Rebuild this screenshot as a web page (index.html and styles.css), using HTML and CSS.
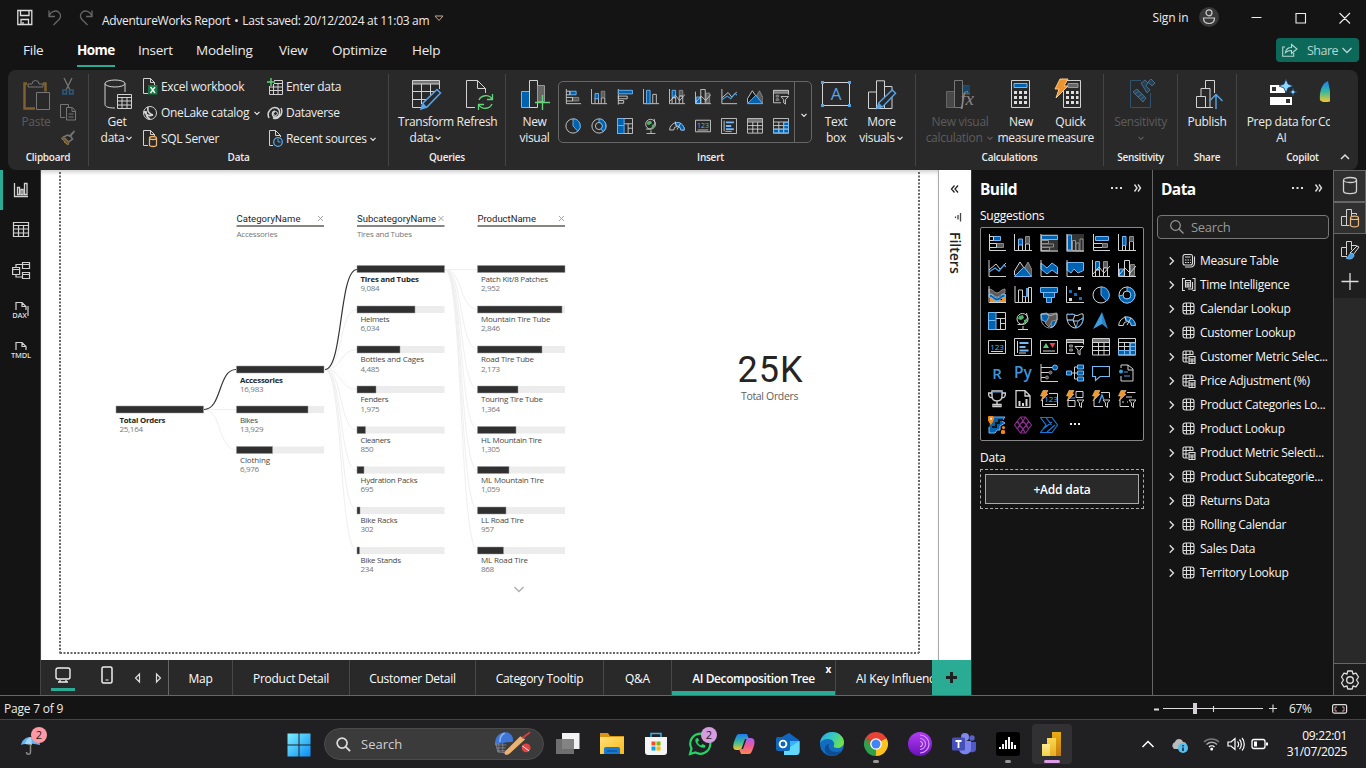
FILE: index.html
```html
<!DOCTYPE html>
<html lang="en">
<head>
<meta charset="utf-8">
<title>AdventureWorks Report</title>
<link rel="stylesheet" href="styles.css">
</head>
<body>
<svg class="defs" aria-hidden="true">
<defs>
<linearGradient id="gWin" x1="0" y1="0" x2="1" y2="1"><stop offset="0" stop-color="#7df0ff"/><stop offset="1" stop-color="#0a8df5"/></linearGradient>
<linearGradient id="gFold" x1="0" y1="0" x2="1" y2="1"><stop offset="0" stop-color="#ffe07a"/><stop offset="1" stop-color="#f7b917"/></linearGradient>
<linearGradient id="gCopA" x1="0" y1="0" x2="0" y2="1"><stop offset="0" stop-color="#1f7cf0"/><stop offset=".5" stop-color="#35b8a0"/><stop offset="1" stop-color="#f8c62a"/></linearGradient>
<linearGradient id="gCopB" x1="0" y1="0" x2="0" y2="1"><stop offset="0" stop-color="#a85ff0"/><stop offset=".5" stop-color="#f0589a"/><stop offset="1" stop-color="#fd8a4e"/></linearGradient>
<linearGradient id="gEdge" x1="0" y1="0" x2="1" y2=".4"><stop offset="0" stop-color="#2aa8ea"/><stop offset=".55" stop-color="#35c9c0"/><stop offset="1" stop-color="#6fe04e"/></linearGradient>
<linearGradient id="gTor" x1="0" y1="0" x2="0" y2="1"><stop offset="0" stop-color="#b13cf5"/><stop offset="1" stop-color="#6a12b8"/></linearGradient>
<linearGradient id="gPb1" x1="0" y1="0" x2="0" y2="1"><stop offset="0" stop-color="#e8ad14"/><stop offset="1" stop-color="#c47a0d"/></linearGradient>
<linearGradient id="gPb2" x1="0" y1="0" x2="0" y2="1"><stop offset="0" stop-color="#fad752"/><stop offset="1" stop-color="#e8ae22"/></linearGradient>
<linearGradient id="gPb3" x1="0" y1="0" x2="0" y2="1"><stop offset="0" stop-color="#fdea90"/><stop offset="1" stop-color="#f5cf48"/></linearGradient>

<symbol id="v-sbar" viewBox="0 0 18 18"><path class="w" d="M1.500 0v16.500H18"/><path class="b" d="M5.500 2.500h7v4h-7z"/><path class="w" d="M1.500 2.500h4v4h-4"/><path class="g" d="M8.500 9.500h7v4h-7z"/><path class="w" d="M1.500 9.500h7v4h-7"/></symbol>
<symbol id="v-scol" viewBox="0 0 18 18"><path class="w" d="M.5 0v16.500H18M4.500 16v-6h4v6M11.500 16v-6h4v6"/><path class="b" d="M4.500 5h4v6h-4z"/><path class="g" d="M11.500 2.500h4v7h-4z"/></symbol>
<symbol id="v-cbar" viewBox="0 0 18 18"><path class="w" d="M1.500 0v17.500"/><path class="b" d="M1.500 1.500h16v4h-16z"/><path class="w" d="M1.500 8h10v3h-10zM1.500 13h6v3h-6"/></symbol>
<symbol id="v-cbars" viewBox="0 0 18 18"><path d="M0 0h18v18H0z" fill="#343434"/><path class="b" d="M1.500 1.500h16v4h-16z"/><path class="g2" d="M1.500 6.500h7v3h-7zM1.500 10h12v3h-12zM1.500 13.500h8v3h-8z"/><path class="w" d="M1 0v17H18"/></symbol>
<symbol id="v-ccol" viewBox="0 0 18 18"><path class="w" d="M.5 0v16.500H18M11 16V6h4v10"/><path class="b" d="M4 1.500h4v15h-4z"/></symbol>
<symbol id="v-ccols" viewBox="0 0 18 18"><path d="M0 0h18v18H0z" fill="#343434"/><path class="b" d="M1.500 1h4v15h-4z"/><path class="g2" d="M6.500 6.500h3v10h-3zM10 9h3v8h-3zM14 5h3v12h-3z"/><path class="w" d="M1 0v17H18"/></symbol>
<symbol id="v-hbar" viewBox="0 0 18 18"><path class="w" d="M1.500 0v16.500H18M1.500 9.500h9v4h-9"/><path class="b" d="M3.500 2.500h13v4h-13z"/><path class="g" d="M10.500 9.500h5v4h-5z"/></symbol>
<symbol id="v-hcol" viewBox="0 0 18 18"><path class="w" d="M.5 0v16.500H18M11.500 16V7h4v9M4.500 16V3h3v13"/><path class="b" d="M4.500 2.500h3.500v9h-3.500z"/><path class="g" d="M11.500 2.500h4v5h-4z"/></symbol>
<symbol id="v-line" viewBox="0 0 18 18"><path class="w" d="M1 0v16.500H18M1 10l7-6 4 5 6-6"/><path class="l" stroke-width="1.300" d="M1 12l6-4 4 3 5-6 2 2"/></symbol>
<symbol id="v-area" viewBox="0 0 18 18"><path class="g" d="M6 16l8-14 4 8v6z"/><path d="M.5 15V11L6 2l6 9-6 5z" fill="#151515" stroke="#d6d6d6"/><path class="b" d="M.5 16.500L10 7l7.500 9.500z"/></symbol>
<symbol id="v-sarea" viewBox="0 0 18 18"><path class="b" d="M1 3l6 5 5-5 5.500 4v7l-5.500-4-5 4-6-5z"/><path class="w" d="M1 0v16.500H18"/></symbol>
<symbol id="v-harea" viewBox="0 0 18 18"><path class="b" d="M1 2.500h16.500v8L12 13l-4-4-3 4-4-3z"/><path class="w" d="M1 0v16.500H18"/></symbol>
<symbol id="v-combo1" viewBox="0 0 18 18"><path class="b" d="M3.500 1.500h4v8h-4z"/><path class="g" d="M11.500 1.500h4v6h-4z"/><path class="w" d="M.5 0v16.500H18M3.500 16v-6h4v6M11.500 16V8h4v8M1 14l6-7 5 6 6-7"/></symbol>
<symbol id="v-combo2" viewBox="0 0 18 18"><path class="b" d="M1.500 9h5v7h-5z"/><path class="g" d="M12.500 4.500h4v11h-4z"/><path class="w" d="M.5 3v13.500H18M6.500 16V.5h5V16M1 15l6-7 5 5 6-7"/></symbol>
<symbol id="v-ribbon" viewBox="0 0 18 18"><path d="M2 8h4v6h8V8h4v9H2z" fill="#ee922e"/><path class="g" d="M1 3c4 0 5 4 8 4s4-4 8-4v4c-4 0-5 4-8 4s-4-4-8-4z"/><path class="b" d="M1 8c4 0 5 4 8 4s4-4 8-4v3c-4 0-5 4-8 4s-4-4-8-4z"/><path class="w" d="M1 0v16.500H18"/></symbol>
<symbol id="v-water" viewBox="0 0 18 18"><path class="w" d="M1 0v16.500H18M4.500 16V4h4v12M14.500 16V1.500h3V16M11.500 11v5"/><path d="M9 10h3V2h2v9H9z" fill="#57a5e8"/></symbol>
<symbol id="v-funnel" viewBox="0 0 18 18"><path class="b" d="M.5 1.500h17v5H.5zM3.500 6.500h11v5h-11zM6.500 11.500h5v5h-5z"/></symbol>
<symbol id="v-scat" viewBox="0 0 18 18"><path class="w" d="M.5 0v16.500H18"/><path fill="#0b6fc7" d="M3 4h3v3H3zM8 7h3v3H8zM13 11h3v3h-3z"/><path fill="#d6d6d6" d="M12 1h3v3h-3zM3 12h3v3H3z"/></symbol>
<symbol id="v-pie" viewBox="0 0 18 18"><circle class="w" cx="9" cy="9" r="8"/><path class="b" d="M9 1v8l5.500 6A8 8 0 0 0 9 1z"/></symbol>
<symbol id="v-donut" viewBox="0 0 18 18"><circle class="w" cx="9" cy="9" r="8"/><circle class="w" cx="9" cy="9" r="4"/><path class="b" d="M9 1v4a4 4 0 1 1-4 4l-4 1a8 8 0 1 0 8-9z"/></symbol>
<symbol id="v-donuth" viewBox="0 0 18 18"><circle class="w" cx="9" cy="9" r="8"/><circle class="w" cx="9" cy="9" r="4"/><path class="b" d="M9 1v4a4 4 0 0 1 2.500 7l2 3.500A8 8 0 0 0 9 1z"/></symbol>
<symbol id="v-tree" viewBox="0 0 18 18"><path class="w" d="M.5 .5h17v17H.5zM8 6.500h9.500M12.500 6.500v11M12.500 11.500h5M12.500 6.500"/><path class="b" d="M.5.5h7.500v17H.5z"/><path d="M.5 8.500h7" stroke="#74b9f5"/></symbol>
<symbol id="v-globe" viewBox="0 0 18 18"><path class="w" d="M12.500 1a8 8 0 0 1-9 11.500M9 14v3M4 17.500h10"/><circle class="w" cx="8.500" cy="7" r="5.500"/><path fill="#4fb566" d="M5 4l4-1 1 3-3 2-3-1zM10 8l3-1-1 4-2 1z"/></symbol>
<symbol id="v-map" viewBox="0 0 18 18"><path class="b" d="M1 2l6-1 2 4-3 5-4-2zM11 9l6-2-3 7-3 2z"/><path class="g" d="M8 2l9-1v7l-5 1-3 6-4-4 4-5z"/><path class="w" d="M1 2c4 1 5-1 8 1s5-2 8-1c1 7-1 13-8 14-6-1-9-7-8-14z" stroke-opacity=".7"/></symbol>
<symbol id="v-map2" viewBox="0 0 18 18"><path class="w" d="M1 2c4 1 5-1 8 1s5-2 8-1c1 7-1 13-8 14-6-1-9-7-8-14zM1 8h6l3 8M7 8l2-5M7 9h5l5-3"/><path class="l" d="M1 2c3 2 4-1 8 1M7 8H2M12 9l5-3c0 5-3 9-7 10z"/></symbol>
<symbol id="v-nav" viewBox="0 0 18 18"><path fill="#3a9fe0" d="M10 0L1 17l9-5z"/><path fill="#2a86c8" d="M10 0l6 17-6-5z"/></symbol>
<symbol id="v-gauge" viewBox="0 0 18 18"><path class="w" d="M.7 13.500a8.300 8.300 0 0 1 16.600 0h-4a4 4 0 0 0-8 0z"/><path class="b" d="M7 5.300c5-1.500 10 2 10.300 8.200h-4C13 10 11 9 9 9z"/><path class="w" d="M7 4l1 5M9 13l4-7"/></symbol>
<symbol id="v-card" viewBox="0 0 18 18"><path class="w" d="M.5 2.500h17v13H.5zM3 13.500h12"/><text x="9" y="11.500" class="s-num">123</text></symbol>
<symbol id="v-mcard" viewBox="0 0 18 18"><path class="w" d="M.5.5h17v17H.5zM3.500 3v12M5 15h7"/><path stroke="#74b9f5" stroke-width="2" d="M5.500 5h9M5.500 9h6M5.500 12.500h9"/></symbol>
<symbol id="v-kpi" viewBox="0 0 18 18"><path class="w" d="M.5 2.500h17v13H.5zM3 13h12"/><path fill="#5fc777" d="M3 10l3-5 3 5z"/><path fill="#ef4351" d="M9.500 5h6l-3 5z"/></symbol>
<symbol id="v-slicer" viewBox="0 0 18 18"><path d="M0 1h18v3H0z" fill="#777"/><path class="w" d="M9 15.500H.5V1.500h17v5M.5 4.500h17M9 8.500h8.500L14 12v5l-2-1.500V12z"/><path class="g" d="M3.500 7h3v2h-3zM3.500 11h3v2h-3z"/></symbol>
<symbol id="v-table" viewBox="0 0 18 18"><path d="M1 1h16v3H1z" fill="#777"/><path class="w" d="M.5.500h17v16.500H.5zM.5 4.500h17M.5 8.500h17M.5 12.500h17M6.500 4.500V17M12 4.500V17"/></symbol>
<symbol id="v-matrix" viewBox="0 0 18 18"><path fill="#0063b1" d="M12 5h6v12H1v-4h11z"/><path class="w" d="M.5.500h17v16.500H.5zM.5 4.500h17M.5 8.500h17M.5 12.500h17M6.500 4.500V17M12 4.500V17"/><path stroke="#74b9f5" fill="none" d="M12 5h5.500v12H.5v-4.500h17M12 8.500h5.500M12 5v12M6.500 13v4"/></symbol>
<symbol id="v-r" viewBox="0 0 18 18"><text x="9" y="15" class="s-r">R</text></symbol>
<symbol id="v-py" viewBox="0 0 18 18"><text x="9" y="14" class="s-py">Py</text></symbol>
<symbol id="v-inf" viewBox="0 0 18 18"><path class="w" d="M1 0v17.500H18M1 3.500h12M1 8.500h8M1 13.500h5"/><circle class="b" cx="15" cy="3.500" r="2.500"/><circle class="g" cx="10.500" cy="8.500" r="1.500"/><circle class="g" cx="7" cy="13.500" r="1.500"/></symbol>
<symbol id="v-decomp" viewBox="0 0 18 18"><path class="w" d="M5 9h6M8.500 3v12M8.500 3h3M8.500 15h3"/><path class="b" d="M.5 7h5v4h-5zM11.500 1h6v4h-6zM11.500 7h6v4h-6zM11.500 13h6v4h-6z"/></symbol>
<symbol id="v-qa" viewBox="0 0 18 18"><path d="M.5 2.500h17v10H8l-4.500 4v-4h-3z" fill="none" stroke="#74b9f5" stroke-width="1.200"/></symbol>
<symbol id="v-narr" viewBox="0 0 18 18"><path class="w" d="M3 4V1h7l5 4v12H3v-5M10 1v5h5"/><circle cx="3" cy="7.500" r="2" fill="#3a9fe0"/><path class="l" d="M6 8h4M6 12h6"/></symbol>
<symbol id="v-trophy" viewBox="0 0 18 18"><path class="w" stroke-width="1.400" d="M4 1h10v5c0 3-2 5-5 5S4 9 4 6zM4 3H.5c0 4 1 5 4 5M14 3h3.500c0 4-1 5-4 5M9 11v4M5 16.500h8v-2H5z"/><path d="M4 2h10M5 15.500h8" stroke="#4a9fe3"/></symbol>
<symbol id="v-pag" viewBox="0 0 18 18"><path class="w" stroke-width="1.300" d="M2 .7h9l5 5v11.600H2zM11 1v5h5"/><path d="M4.500 11h2v5h-2zM8 13h2v3H8zM11.500 9h2v7h-2z" fill="#d6d6d6"/></symbol>
<symbol id="v-bolt" viewBox="0 0 18 18"><path fill="#f0962e" stroke="#f8c878" stroke-width=".6" d="M3 .5h5L6 4h2L1 11l2-5H.5z"/></symbol>
<symbol id="v-b123" viewBox="0 0 18 18"><path class="w" d="M9 3.500h8.500v13H2.500V10M5 14.500h11"/><text x="11" y="12" class="s-num">123</text><use href="#v-bolt"/></symbol>
<symbol id="v-bsl" viewBox="0 0 18 18"><path class="w" d="M10 1.500h7v6h-7zM2 10.500h7v6H2zM11 10h7l-2.500 3v4.500l-2-1.500v-3z"/><path class="l" d="M3 8h6"/><use href="#v-bolt"/></symbol>
<symbol id="v-btx" viewBox="0 0 18 18"><path class="w" d="M9 2.500h8.500V8M2 10v6.500h9M11 10h7l-2.500 3v4.500l-2-1.500v-3z"/><path class="l" d="M7 13l3-8 2 5" stroke-width="1.400"/><use href="#v-bolt"/></symbol>
<symbol id="v-bli" viewBox="0 0 18 18"><path class="w" d="M9 2.500h8.500M2 10v6.500h9M11 10h7l-2.500 3v4.500l-2-1.500v-3zM8 7h6M4 12h2M9 12h1"/><use href="#v-bolt"/></symbol>
<symbol id="v-arc" viewBox="0 0 18 18"><path d="M4 1h13l-3 4 3 2-5 3v4H9l-2 3H1v-6" fill="#0063b1" stroke="#74b9f5"/><path d="M4 11h4V7h3V4h4" stroke="#111" fill="none" stroke-width="2"/><path fill="#f28718" d="M3-.5a3 3 0 0 1 3 3C6 5 3 9 3 9S-.5 5-.5 2.500a3 3 0 0 1 3.500-3z"/><circle cx="3" cy="2.800" r="1" fill="#fff"/><circle cx="15.500" cy="11.500" r="1.600" fill="#f28718"/><circle cx="15" cy="16" r="2.200" fill="#f28718"/></symbol>
<symbol id="v-pa" viewBox="0 0 18 18"><path fill="none" stroke="#8d2c91" stroke-width="1.200" stroke-linejoin="round" d="M6.500 1h5L17.500 9l-6 8h-5L.5 9zM9 5l3.500 4L9 13 5.500 9zM6.500 1L9 5l2.500-4M6.500 17L9 13l2.500 4M3.500 5l2 4-2 4M14.500 5l-2 4 2 4"/></symbol>
<symbol id="v-flow" viewBox="0 0 18 18"><path fill="none" stroke="#1779d8" stroke-width="1.200" d="M.5 1.500H12L17.500 9 12 16.500H.5L6 9zM6 1.500L11.500 9M3 13l9-7M7 16l8-7"/></symbol>
<symbol id="v-more" viewBox="0 0 18 18"><path fill="#ececec" d="M4 7h2v2H4zM8 7h2v2H8zM12 7h2v2h-2z"/></symbol>

<symbol id="chev" viewBox="0 0 8 8"><path d="M1.500 2.800L4 5.300l2.500-2.500" fill="none" stroke="currentColor" stroke-width="1.200"/></symbol>
<symbol id="t-arr" viewBox="0 0 10 10"><path d="M3 .8L7.200 5 3 9.200" fill="none" stroke="#ddd" stroke-width="1.500"/></symbol>
<symbol id="t-table" viewBox="0 0 14 14"><rect class="t" x="1" y="1" width="11" height="11" rx="2.500"/><path class="t" d="M1 4.500h11M1 8.500h11M4.500 1v11M8.500 1v11"/></symbol>
<symbol id="t-calc" viewBox="0 0 14 14"><path class="t" d="M3 13h6a3.500 3.500 0 0 0 3.500-3.500v-7M3 .5h5.500a2 2 0 0 1 2 2V9a2 2 0 0 1-2 2H3a2 2 0 0 1-2-2V2.500a2 2 0 0 1 2-2z"/><path class="t" d="M3 3h5.500M3 6h1.500M5.500 6H7M8 6h1M3 8.500h1.500M5.500 8.500H7M8 8.500h1"/></symbol>
<symbol id="t-time" viewBox="0 0 14 14"><path class="t" d="M3 .5H.5v12H3M10.500.5H13v12h-2.500"/><path class="t" d="M3.500 2.500h5v6.500h-5zM10.500 4v7H6M3.500 4.700h5M3.500 7h5M6 4.500V9"/></symbol>
<symbol id="t-field" viewBox="0 0 14 14"><path class="t" d="M6 12H2.500A1.500 1.500 0 0 1 1 10.500v-8A1.500 1.500 0 0 1 2.500 1h7A1.500 1.500 0 0 1 11 2.500V5M1 4.500h10M1 8h5M4 1v11M8 1v4"/><path class="t" d="M7 6.500h6v7H7zM7 9h6M7 11h6M10 9v4"/></symbol>
<symbol id="pencil" viewBox="0 0 22 22"><path d="M1 21l2-6L17 1.500l3.500 3.500L7 19z" fill="#292929" stroke="#57a5e8" stroke-width="1.500"/><path d="M1 21l2-6 4 4z" fill="#57a5e8"/></symbol>
<symbol id="bars3" viewBox="0 0 30 30"><path class="w" d="M1.500 12h8v16.500h-8zM9.500.8h8v27.700h-8zM17.500 6.500h7.500v22h-7.500z"/></symbol>
</defs>
</svg>

<header class="titlebar">
  <svg class="quick" viewBox="0 0 76 18"><g fill="none" stroke="#ddd" stroke-width="1.300"><path d="M.8 1.500h14v14h-14zM3.500 1.500v5h8.500v-5M4 15.500v-5h7.500v5M6 13v2"/></g><g fill="none" stroke="#666" stroke-width="1.300"><path d="M32 1.500v6h6M32 7c2-5 7-6 9.500-4 3.500 3 2 6 0 8l-5 5"/><path d="M75 1.500v6h-6M75 7c-2-5-7-6-9.500-4-3.500 3-2 6 0 8l5 5"/></g></svg>
  <span class="doc-title">AdventureWorks Report<b>•</b>Last saved: 20/12/2024 at 11:03 am</span>
  <svg class="title-caret" viewBox="0 0 10 7"><path d="M1 1h8L5 5.500z" fill="none" stroke="#c0a890"/></svg>
  <span class="signin">Sign in</span>
  <svg class="avatar" viewBox="0 0 20 20"><circle cx="10" cy="10" r="10" fill="#383838"/><circle cx="10" cy="5.800" r="3" fill="none" stroke="#ccc" stroke-width="1.200"/><path d="M4.500 11h11c0 4-2.300 5.500-5.500 5.500S4.500 15 4.500 11z" fill="none" stroke="#ccc" stroke-width="1.200"/></svg>
  <svg class="winctl" viewBox="0 0 100 12"><path d="M.5 5.500h10M45 1.500h9.500V11H45zM88.500 1l10.500 10.500M99 1L88.500 11.500" fill="none" stroke="#eee" stroke-width="1.100"/></svg>
</header>

<nav class="menu">
  <span class="m-file">File</span><span class="m-home">Home</span><span class="m-ins">Insert</span><span class="m-mod">Modeling</span><span class="m-view">View</span><span class="m-opt">Optimize</span><span class="m-help">Help</span>
  <button class="share"><svg viewBox="0 0 16 14"><path d="M3 4H.7v9.300h11V10M3.500 9.500C4 6 6 4.500 9.500 4.500V1.500L15 6l-5.500 4.500v-3c-3 0-4.500.5-6 2z" fill="none" stroke="currentColor" stroke-width="1.100"/></svg><span>Share</span><svg class="sh-ch" viewBox="0 0 10 8"><path d="M.5 2L5 6.500 9.500 2" fill="none" stroke="currentColor" stroke-width="1.300"/></svg></button>
</nav>

<section class="ribbon">
  <div class="grp g-clip">
    <div class="grp-body">
      <div class="big dim"><svg viewBox="0 0 30 32"><path d="M6 4.500H3.500v25H14M22 4.500h2.500v8" fill="none" stroke="#81602f" stroke-width="2.500"/><path d="M7 8V5h4a3.500 3.500 0 0 1 7 0h4v3z" fill="#292929" stroke="#777"/><path d="M15.500 13.500h13v17h-13z" fill="#292929" stroke="#777"/></svg><p>Paste</p></div>
      <div class="minis">
        <svg viewBox="0 0 16 18"><path d="M4 0l6 12M12 0L6 12" stroke="#777" fill="none" stroke-width="1.300"/><path d="M3 12h3.500v4H3zM9.500 12H13v4H9.500z" fill="none" stroke="#2d5a7d" stroke-width="1.500"/></svg>
        <svg viewBox="0 0 16 18"><path d="M5 13.500H.5V.500h8v3M6.500 3.500h6L15.500 7v9h-9zM12 4v3.500h3M8.500 10h5M8.500 13h5" fill="none" stroke="#777"/></svg>
        <svg viewBox="0 0 16 18"><path d="M14.500 1l-4 5 2 3-4 3-5-5 4-2 2 1z" fill="none" stroke="#777" stroke-width="1.500"/><path d="M1 8l7 7 1-3-5-4zM4 12l4 3" fill="#6c5838" stroke="#8d7040"/></svg>
      </div>
    </div><h6>Clipboard</h6>
  </div>
  <div class="grp g-data">
    <div class="grp-body">
      <div class="big"><svg viewBox="0 0 30 32"><ellipse class="w" cx="13" cy="4.500" rx="10" ry="3.500"/><path class="w" d="M3 4.500v21C3 28 7 29 13 29M23 4.500V13"/><path class="w" fill="#292929" d="M15.500 15.500h14v14h-14zM15.500 18.500h14M15.500 22h14M15.500 26h14M20 18v11.500M25 18v11.500"/></svg><p>Get<br>data<svg class="cv"><use href="#chev"/></svg></p></div>
      <div class="links l1">
        <p><svg viewBox="0 0 16 18"><path class="w" d="M6 15.500H1.500v-15h7l4 4V7M8.500.500v4h4"/><path d="M6 7h9.500v9.500H6z" fill="#107c41"/><path d="M8.500 9l4.500 6M13 9l-4.500 6" stroke="#fff" stroke-width="1.300"/></svg>Excel workbook</p>
        <p><svg viewBox="0 0 16 18"><circle class="w" cx="8" cy="9" r="6.500"/><path class="w" stroke-width="1.700" d="M2 7c2 5 6 5 9 4M6 3c-1 4 1 7 5 8M8 15c-3-1-4-4-4-8"/></svg>OneLake catalog <svg class="cv far"><use href="#chev"/></svg></p>
        <p><svg viewBox="0 0 16 18"><path class="w" d="M6 15.500H1.500v-15h7l4 4V7M8.500.500v4h4"/><path d="M7.500 8v7c0 2 7 2 7 0V8c0-2-7-2-7 0zc0 2 7 2 7 0" fill="#292929" stroke="#f0b16a" stroke-width="1.300"/></svg>SQL Server</p>
      </div>
      <div class="links l2">
        <p><svg viewBox="0 0 16 18"><path class="w" d="M7 2.500h8.500v14H2.500V8M2.500 9h13M2.500 12.500h13M6.500 6v10M11 5v11M7 5.500h8"/><path d="M4 0v8M0 4h8" stroke="#63d479" stroke-width="1.400"/></svg>Enter data</p>
        <p><svg viewBox="0 0 16 18"><path class="w" stroke-width="1.500" d="M2 14C-1 8 5 2 10 4c4 2 3 9-1 9-4 1-5-5-1-6M14 4c3 6-3 12-8 10"/><circle class="w" cx="8.500" cy="9.500" r="2"/></svg>Dataverse</p>
        <p><svg viewBox="0 0 16 18"><path class="w" d="M6 15.500H2.500v-15h6l5 5V7M8.500.500v5h5"/><circle cx="11" cy="12" r="4.300" fill="#292929" stroke="#57a5e8" stroke-width="1.300"/><path d="M11 9v3h2.500" fill="none" stroke="#57a5e8"/></svg>Recent sources <svg class="cv"><use href="#chev"/></svg></p>
      </div>
    </div><h6>Data</h6>
  </div>
  <div class="grp g-query">
    <div class="grp-body">
      <div class="big q1"><svg viewBox="0 0 30 32"><path d="M1.500 1.500h27v3.500h-27z" fill="#777"/><path class="w" d="M11 28.500H1.500v-27h27V10M1.500 5h27M1.500 12.500h23M1.500 20.500h15M10.500 5v20M19.500 5v11"/><svg x="9" y="9" width="22" height="22"><use href="#pencil"/></svg></svg><p>Transform<br>data<svg class="cv"><use href="#chev"/></svg></p></div>
      <div class="big q2"><svg viewBox="0 0 30 32"><path class="w" d="M13 28.500H4.500v-27h11l8 8V14M15.500 1.500v8h8"/><path d="M17 21c2-5 10-6 13-1M30.500 15v5.500H25M30 25c-2 5-10 6-13 1M16.500 31v-5.500H22" fill="none" stroke="#63d479" stroke-width="1.300"/></svg><p>Refresh</p></div>
    </div><h6>Queries</h6>
  </div>
  <div class="grp g-insert">
    <div class="grp-body">
      <div class="big i1"><svg viewBox="0 0 30 32"><path d="M1.500 12.500h8v16h-8z" fill="#0063b1" stroke="#74b9f5"/><path class="w" d="M9.500 1.500h8v27h-8z"/><path d="M17.500 6.500h7v16h-7z" fill="#666" stroke="#999"/><path d="M22.500 16v15M15 23.500h15" stroke="#63d479" stroke-width="1.400"/></svg><p>New<br>visual</p></div>
      <div class="gallery">
        <div class="gal-grid">
          <svg><use href="#v-sbar"/></svg><svg><use href="#v-scol"/></svg><svg><use href="#v-cbar"/></svg><svg><use href="#v-ccol"/></svg><svg><use href="#v-combo1"/></svg><svg><use href="#v-combo2"/></svg><svg><use href="#v-line"/></svg><svg><use href="#v-area"/></svg><svg><use href="#v-slicer"/></svg>
          <svg><use href="#v-pie"/></svg><svg><use href="#v-donuth"/></svg><svg><use href="#v-tree"/></svg><svg><use href="#v-globe"/></svg><svg><use href="#v-gauge"/></svg><svg><use href="#v-card"/></svg><svg><use href="#v-mcard"/></svg><svg><use href="#v-table"/></svg><svg><use href="#v-matrix"/></svg>
        </div>
        <div class="gal-drop"><svg class="cv"><use href="#chev"/></svg></div>
      </div>
      <div class="big i2"><svg viewBox="0 0 30 32"><path class="w" d="M1.500 3.500h27v23h-27z"/><path fill="#57a5e8" d="M0 2h3v3H0zM27 2h3v3h-3zM0 25h3v3H0zM27 25h3v3h-3z"/><text x="15" y="21" class="s-a">A</text></svg><p>Text<br>box</p></div>
      <div class="big i3"><svg viewBox="0 0 30 32"><svg y="1" width="30" height="30"><use href="#bars3"/></svg><svg x="9" y="9" width="21" height="22"><use href="#pencil"/></svg></svg><p>More<br>visuals<svg class="cv"><use href="#chev"/></svg></p></div>
    </div><h6>Insert</h6>
  </div>
  <div class="grp g-calc">
    <div class="grp-body">
      <div class="big dim c1"><svg viewBox="0 0 30 32"><path d="M1.500 12.500h8v16h-8zM17.500 7h7v8h-7z" fill="#484848" stroke="#666"/><path d="M9.500 1.500h8v27h-8z" fill="none" stroke="#777"/><path d="M18 7h7v7h-7z" fill="#174667"/><text x="22" y="26" class="s-fx">fx</text></svg><p>New visual<br>calculation <svg class="cv"><use href="#chev"/></svg></p></div>
      <div class="big c2"><svg viewBox="0 0 30 32"><path class="w" d="M5.500 1.500h18v27h-18z"/><path class="b" d="M8 4.500h13v4H8z"/><path fill="#ddd" d="M8 12h3v3H8zM13 12h3v3h-3zM18 12h3v3h-3zM8 17h3v3H8zM13 17h3v3h-3zM18 17h3v3h-3zM8 22h3v3H8zM13 22h3v3h-3zM18 22h3v3h-3z"/></svg><p>New<br>measure</p></div>
      <div class="big c3"><svg viewBox="0 0 30 32"><path class="w" d="M7.500 1.500h17v27h-17z"/><path d="M12 4.500h10v4H12z" fill="#666" stroke="#999"/><path fill="#ddd" d="M10 12h3v3h-3zM15 12h3v3h-3zM20 12h2.500v3H20zM10 17h3v3h-3zM15 17h3v3h-3zM20 17h2.500v3H20zM10 22h3v3h-3zM15 22h3v3h-3zM20 22h2.500v3H20z"/><path d="M4 0h8L8 7h4L0 19l3-9H-1z" fill="#ee922e" stroke="#f7c987"/></svg><p>Quick<br>measure</p></div>
    </div><h6>Calculations</h6>
  </div>
  <div class="grp g-sens">
    <div class="grp-body"><div class="big dim full"><svg viewBox="0 0 30 32"><path d="M15 1.500H4.500v27h20V14" fill="none" stroke="#2f536d"/><path d="M7 13l4-3 9 9-3 4zM15 4l4-3 3 3-2 3 4 4-3 3zM22 3l3-3 4 4-3 3z" fill="#24435a" stroke="#456b85"/><path d="M9 15l4-3M12 18l4-3M15 20l4-3" stroke="#456b85"/></svg><p>Sensitivity<br><svg class="cv"><use href="#chev"/></svg></p></div></div><h6>Sensitivity</h6>
  </div>
  <div class="grp g-share">
    <div class="grp-body"><div class="big full"><svg viewBox="0 0 30 32"><path class="w" stroke-linejoin="round" d="M4.500 17.500h9v11h-9zM9 17V9.500h9v19h-4.500M13.500 9V1.500h9V14M13 28.500h8"/><path d="M24 30V16M17.500 22l6.500-6.500 6.500 6.500" stroke="#57a5e8" fill="none" stroke-width="1.400"/></svg><p>Publish</p></div></div><h6>Share</h6>
  </div>
  <div class="grp g-cop">
    <div class="grp-body"><div class="big p1"><svg viewBox="0 0 30 32"><path fill="#fff" d="M3 6h15v8H3zM3 18h22v8H3z"/><path fill="#333" d="M5 8h4v4H5zM19 20h4v4h-4z"/><path d="M19 0l2 5 5 2-5 2-2 5-2-5-5-2 5-2zM26 9l1 3 3 1-3 1-1 3-1-3-3-1 3-1z" fill="#90d7ff" stroke="#153e69" stroke-width=".8"/></svg><p>Prep data for<br>AI</p></div><div class="big p2"><svg viewBox="0 0 30 32"><path d="M10 2C4 4 1 13 2 21c2 3 7 2 12 1z" fill="url(#gCopA)"/></svg><p>Co</p></div></div><h6>Copilot</h6>
  </div>
  <svg class="collapse" viewBox="0 0 10 8"><path d="M1 6l4-4 4 4" fill="none" stroke="#ddd" stroke-width="1.500"/></svg>
</section>

<main class="work">
  <aside class="rail">
    <svg class="on" viewBox="0 0 18 18"><path class="w" stroke-width="1.300" d="M2.500 2v13.500H16M5.500 6.500h2v7h-2zM9 8.500h2v5H9zM12.500 2.500h2.500v11h-2.500z"/></svg>
    <svg viewBox="0 0 18 18"><path class="w" stroke-width="1.200" d="M1.500 1.500h15v14h-15zM1.500 4.500h15M1.500 8h15M1.500 12h15M6.500 4.500v11M11.500 4.500v11"/></svg>
    <svg viewBox="0 0 18 18"><path class="w" stroke-width="1.200" d="M.6 6.500h7v7h-7zM.6 8.500h7M10.500 1.500h7v6h-7zM10.500 3.500h7M10.500 11.500h7v6h-7zM10.500 13.500h7M4 6V3.500h6M4 13.500V16h6"/></svg>
    <svg viewBox="0 0 18 18"><path class="w" stroke-width="1.200" d="M4 9V1.500h6l4 4V9M10 1.500v4h4M16 5v10"/><text x="7.500" y="17" class="s-rail">DAX</text></svg>
    <svg viewBox="0 0 18 18"><path class="w" stroke-width="1.200" d="M4 9V1.500h6l4 4V9M10 1.500v4h4"/><text x="9" y="17" class="s-rail">TMDL</text></svg>
  </aside>

  <div class="stage">
    <div class="stage-top">
    <svg class="canvas" viewBox="41 170 897 490">
      <path d="M60 172v481.500M60 653h859M919 172v481" fill="none" stroke="#666" stroke-width="2" stroke-dasharray="2 1.500"/>
      <g class="faint">
        <path d="M204 409.500h32M204 409.500c18 0 14 40 32 40"/>
        <path d="M325 369.500c18 0 14-60 32-60M325 369.500c18 0 14-20 32-20M325 369.500c18 0 14 20 32 20M325 369.500c18 0 14 60.500 32 60.500M325 369.500c18 0 14 101 32 101M325 369.500c18 0 14 141 32 141M325 369.500c18 0 14 181 32 181"/>
        <path d="M445 269.500h33M445 269.500c18 0 14 40 33 40M445 269.500c18 0 14 80 33 80M445 269.500c18 0 14 120 33 120M445 269.500c18 0 14 160.500 33 160.500M445 269.500c18 0 14 201 33 201M445 269.500c18 0 14 241 33 241M445 269.500c18 0 14 281 33 281"/>
      </g>
      <path class="strong" d="M204 409.500c18 0 14-40 32-40M325 369.500c18 0 14-100 32-100"/>
      <g class="track"><path d="M236.500 406h87.500v7h-87.500zM236.500 446.500h87.500v7h-87.500z"/><path d="M357 306h87.500v7H357zM357 346h87.500v7H357zM357 386h87.500v7H357zM357 426.500h87.500v7H357zM357 466.500h87.500v7H357zM357 507h87.500v7H357zM357 547h87.500v7H357z"/><path d="M477.500 306H565v7h-87.500zM477.500 346H565v7h-87.500zM477.500 386H565v7h-87.500zM477.500 426.500H565v7h-87.500zM477.500 466.500H565v7h-87.500zM477.500 507H565v7h-87.500zM477.500 547H565v7h-87.500z"/></g>
      <g class="bar"><path d="M116 406h87.500v7H116zM236.500 366h87.500v7h-87.500zM236.500 406H308v7h-71.500zM236.500 446.500h36v7h-36z"/><path d="M357 265.500h87.500v7H357zM357 306h58v7h-58zM357 346h43v7h-43zM357 386h19v7h-19zM357 426.500h8.500v7H357zM357 466.500h7v7h-7zM357 507h3v7h-3zM357 547h2.500v7H357z"/><path d="M477.500 265.500H565v7h-87.500zM477.500 306H562v7h-84.500zM477.500 346H542v7h-64.500zM477.500 386H518v7h-40.500zM477.500 426.500H516v7h-38.500zM477.500 466.500H509v7h-31.500zM477.500 507H506v7h-28.500zM477.500 547h26v7h-26z"/></g>
      <g class="head"><text x="236.500" y="222" textLength="64">CategoryName</text><text x="357" y="222" textLength="79">SubcategoryName</text><text x="477.500" y="222" textLength="58.500">ProductName</text></g>
      <path d="M236.500 226H324M357 226h87.500M477.500 226H565" stroke="#605e5c" stroke-width="1.600"/>
      <path d="M318 216l5 5M323 216l-5 5M438.500 216l5 5M443.500 216l-5 5M559 216l5 5M564 216l-5 5" stroke="#999" stroke-width=".9"/>
      <g class="val"><text x="236.500" y="237" textLength="41">Accessories</text><text x="357" y="237" textLength="55">Tires and Tubes</text></g>
      <g class="strongtxt"><text x="119.500" y="423" textLength="46">Total Orders</text><text x="240" y="382.500" textLength="43">Accessories</text><text x="360.500" y="282" textLength="58.500">Tires and Tubes</text></g>
      <g class="lab"><text x="240" y="423" textLength="18">Bikes</text><text x="240" y="463" textLength="30">Clothing</text>
      <text x="360.500" y="322" textLength="29">Helmets</text><text x="360.500" y="362" textLength="63.500">Bottles and Cages</text><text x="360.500" y="402" textLength="28">Fenders</text><text x="360.500" y="443" textLength="30">Cleaners</text><text x="360.500" y="483" textLength="57">Hydration Packs</text><text x="360.500" y="523" textLength="37">Bike Racks</text><text x="360.500" y="563" textLength="40.500">Bike Stands</text>
      <text x="481" y="282" textLength="67">Patch Kit/8 Patches</text><text x="481" y="322" textLength="69.500">Mountain Tire Tube</text><text x="481" y="362" textLength="53">Road Tire Tube</text><text x="481" y="402" textLength="62">Touring Tire Tube</text><text x="481" y="443" textLength="61">HL Mountain Tire</text><text x="481" y="483" textLength="63">ML Mountain Tire</text><text x="481" y="523" textLength="43">LL Road Tire</text><text x="481" y="563" textLength="47">ML Road Tire</text></g>
      <g class="val"><text x="119.500" y="432" textLength="23.500">25,164</text><text x="240" y="392" textLength="23.500">16,983</text><text x="240" y="432" textLength="23.500">13,929</text><text x="240" y="472" textLength="19">6,976</text>
      <text x="360.500" y="291" textLength="19">9,084</text><text x="360.500" y="331" textLength="19">6,034</text><text x="360.500" y="372" textLength="19">4,485</text><text x="360.500" y="412" textLength="19">1,975</text><text x="360.500" y="452" textLength="13">850</text><text x="360.500" y="492" textLength="13">695</text><text x="360.500" y="532" textLength="13">302</text><text x="360.500" y="572" textLength="13">234</text>
      <text x="481" y="291" textLength="19">2,952</text><text x="481" y="331" textLength="19">2,846</text><text x="481" y="372" textLength="19">2,173</text><text x="481" y="412" textLength="19">1,364</text><text x="481" y="452" textLength="19">1,305</text><text x="481" y="492" textLength="19">1,059</text><text x="481" y="532" textLength="13">957</text><text x="481" y="572" textLength="13">868</text></g>
      <path d="M514.500 587l4.500 4.500 4.500-4.500" fill="none" stroke="#b0b0b0" stroke-width="1.500"/>
      <text class="kpi" x="737.500" y="381.500" textLength="65">25K</text><text class="kpilab" x="741" y="400" textLength="57.500">Total Orders</text>
    </svg>
    <div class="filters"><svg viewBox="0 0 10 10"><path d="M4.500 1.500L1.500 5l3 3.500M8 1.500L5 5l3 3.500" fill="none" stroke="#222" stroke-width="1.300"/></svg><svg class="fi" viewBox="0 0 10 10"><path d="M7.500 1v8.500M5 3v4.500M2.500 4.500v1.500" stroke="#444" stroke-width="1.300"/></svg><span>Filters</span></div>
    </div>
    <div class="tabs">
      <div class="tools">
        <span class="dev on"><svg viewBox="0 0 18 16"><rect x="2" y="1" width="14" height="11" rx="2" fill="none" stroke="#eee" stroke-width="1.400"/><path d="M6 13v1.500M12 13v1.500M4 15h10" stroke="#eee" stroke-width="1.300"/></svg></span>
        <span class="dev ph"><svg viewBox="0 0 12 18"><rect x="1" y="1" width="10" height="16" rx="1.500" fill="none" stroke="#eee" stroke-width="1.500"/><path d="M4.500 14h3" stroke="#eee"/></svg></span>
        <svg class="nav" viewBox="0 0 28 10"><path d="M5.500 1v8L1.500 5zM22.500 1v8l4-4z" fill="none" stroke="#ddd" stroke-width="1.200"/></svg>
      </div>
      <span class="tab w1">Map</span><span class="tab w2">Product Detail</span><span class="tab w3">Customer Detail</span><span class="tab w4">Category Tooltip</span><span class="tab w5">Q&amp;A</span><span class="tab w6 active">AI Decomposition Tree<i>x</i></span><span class="tab w7">AI Key Influenc</span><span class="plus"></span>
    </div>
  </div>

  <section class="pane build">
    <header><h2>Build</h2><svg class="pctl" viewBox="0 0 30 10"><path fill="#ddd" d="M0 4h2v2H0zM4.500 4h2v2h-2zM9 4h2v2H9z"/><path d="M23.500 1.500l2.500 3.500-2.500 3.500M27 1.500l2.500 3.500L27 8.500" fill="none" stroke="#ddd" stroke-width="1.400"/></svg></header>
    <h3>Suggestions</h3>
    <div class="viz">
      <svg><use href="#v-sbar"/></svg><svg><use href="#v-scol"/></svg><svg><use href="#v-cbars"/></svg><svg><use href="#v-ccols"/></svg><svg><use href="#v-hbar"/></svg><svg><use href="#v-hcol"/></svg>
      <svg><use href="#v-line"/></svg><svg><use href="#v-area"/></svg><svg><use href="#v-sarea"/></svg><svg><use href="#v-harea"/></svg><svg><use href="#v-combo1"/></svg><svg><use href="#v-combo2"/></svg>
      <svg><use href="#v-ribbon"/></svg><svg><use href="#v-water"/></svg><svg><use href="#v-funnel"/></svg><svg><use href="#v-scat"/></svg><svg><use href="#v-pie"/></svg><svg><use href="#v-donut"/></svg>
      <svg><use href="#v-tree"/></svg><svg><use href="#v-globe"/></svg><svg><use href="#v-map"/></svg><svg><use href="#v-map2"/></svg><svg><use href="#v-nav"/></svg><svg><use href="#v-gauge"/></svg>
      <svg><use href="#v-card"/></svg><svg><use href="#v-mcard"/></svg><svg><use href="#v-kpi"/></svg><svg><use href="#v-slicer"/></svg><svg><use href="#v-table"/></svg><svg><use href="#v-matrix"/></svg>
      <svg><use href="#v-r"/></svg><svg><use href="#v-py"/></svg><svg><use href="#v-inf"/></svg><svg><use href="#v-decomp"/></svg><svg><use href="#v-qa"/></svg><svg><use href="#v-narr"/></svg>
      <svg><use href="#v-trophy"/></svg><svg><use href="#v-pag"/></svg><svg><use href="#v-b123"/></svg><svg><use href="#v-bsl"/></svg><svg><use href="#v-btx"/></svg><svg><use href="#v-bli"/></svg>
      <svg><use href="#v-arc"/></svg><svg><use href="#v-pa"/></svg><svg><use href="#v-flow"/></svg><svg><use href="#v-more"/></svg>
    </div>
    <h3 class="dl">Data</h3>
    <div class="drop"><button>+Add data</button></div>
  </section>

  <section class="pane data">
    <header><h2>Data</h2><svg class="pctl" viewBox="0 0 30 10"><path fill="#ddd" d="M0 4h2v2H0zM4.500 4h2v2h-2zM9 4h2v2H9z"/><path d="M23.500 1.500l2.500 3.500-2.500 3.500M27 1.500l2.500 3.500L27 8.500" fill="none" stroke="#ddd" stroke-width="1.400"/></svg></header>
    <div class="find"><svg viewBox="0 0 14 14"><circle cx="5.500" cy="5.500" r="4.800" fill="none" stroke="#999" stroke-width="1.200"/><path d="M9 9l4.500 4.500" stroke="#999" stroke-width="1.200"/></svg>Search</div>
    <ul>
      <li><svg class="ar"><use href="#t-arr"/></svg><svg><use href="#t-calc"/></svg>Measure Table</li>
      <li><svg class="ar"><use href="#t-arr"/></svg><svg><use href="#t-time"/></svg>Time Intelligence</li>
      <li><svg class="ar"><use href="#t-arr"/></svg><svg><use href="#t-table"/></svg>Calendar Lookup</li>
      <li><svg class="ar"><use href="#t-arr"/></svg><svg><use href="#t-table"/></svg>Customer Lookup</li>
      <li><svg class="ar"><use href="#t-arr"/></svg><svg><use href="#t-field"/></svg>Customer Metric Selec...</li>
      <li><svg class="ar"><use href="#t-arr"/></svg><svg><use href="#t-field"/></svg>Price Adjustment (%)</li>
      <li><svg class="ar"><use href="#t-arr"/></svg><svg><use href="#t-table"/></svg>Product Categories Lo...</li>
      <li><svg class="ar"><use href="#t-arr"/></svg><svg><use href="#t-table"/></svg>Product Lookup</li>
      <li><svg class="ar"><use href="#t-arr"/></svg><svg><use href="#t-field"/></svg>Product Metric Selecti...</li>
      <li><svg class="ar"><use href="#t-arr"/></svg><svg><use href="#t-table"/></svg>Product Subcategorie...</li>
      <li><svg class="ar"><use href="#t-arr"/></svg><svg><use href="#t-table"/></svg>Returns Data</li>
      <li><svg class="ar"><use href="#t-arr"/></svg><svg><use href="#t-table"/></svg>Rolling Calendar</li>
      <li><svg class="ar"><use href="#t-arr"/></svg><svg><use href="#t-table"/></svg>Sales Data</li>
      <li><svg class="ar"><use href="#t-arr"/></svg><svg><use href="#t-table"/></svg>Territory Lookup</li>
    </ul>
  </section>

  <aside class="switch">
    <span class="sel"><svg viewBox="0 0 20 20"><ellipse class="w" stroke-width="1.300" cx="10" cy="4" rx="6.500" ry="2.500"/><path class="w" stroke-width="1.300" d="M3.500 4v11c0 3.500 13 3.500 13 0V4"/></svg></span>
    <span class="sel"><svg viewBox="0 0 20 20"><path class="w" d="M1.500 8.500h5v9h-5zM6.500 17.500V1.500h5V8M11.500 5.500h5V7M6.500 17.500h3"/><path d="M10.500 10v7c0 2.500 8 2.500 8 0v-7c0-2.500-8-2.500-8 0zc0 2 8 2 8 0" fill="#333" stroke="#f0b878" stroke-width="1.200"/></svg></span>
    <span><svg viewBox="0 0 20 20"><path class="w" d="M7 16.500H1.500v-9h5M6.500 15V1.500h5V10M11.500 5.500h5V7"/><path d="M19 7l-6 8-3-2 7-7z" fill="#222" stroke="#ddd"/><path d="M12 13c-4 0-2 4-6 5 3 2 8 1 8-3z" fill="#3fa0ea" stroke="#8fccf8" stroke-width=".7"/></svg></span>
    <span class="add"><svg viewBox="0 0 20 20"><path d="M10 1v17M1.500 9.500h17" stroke="#ddd" stroke-width="1.300"/></svg></span>
    <span class="cog"><svg viewBox="0 0 20 20"><path d="M7.800 1h4.400l.8 3 3-.8 2.500 3.800L16.500 10l2 3-2.500 3.800-3-.8-.8 3H7.800L7 16l-3 .8L1.500 13l2-3-2-3L4 3.200l3 .8z" fill="none" stroke="#ddd" stroke-width="1.300" stroke-linejoin="round"/><circle cx="10" cy="10" r="3.300" fill="none" stroke="#ddd" stroke-width="1.400"/></svg></span>
  </aside>
</main>

<footer class="status"><span>Page 7 of 9</span><svg class="zoomer" viewBox="0 0 124 14"><path d="M1 7.500h5" stroke="#ddd" stroke-width="2"/><path d="M10 6.500h100M60.500 4v6M116 6.500h8M120 2.500v8" stroke="#ddd" stroke-width="1.100"/><path d="M40 1h4v11h-4z" fill="#d5d0d5"/></svg><span class="pct">67%</span><svg class="fit" viewBox="0 0 16 10"><rect x=".6" y=".6" width="14" height="8.500" rx="1.500" fill="none" stroke="#ddd" stroke-width="1.200"/><path d="M5 3H3v4h2M10 3h2v4h-2" fill="none" stroke="#c99"/></svg></footer>

<footer class="taskbar">
  <div class="weather"><svg viewBox="0 0 24 24"><path d="M1 13C2 7 9 2 15 7c3 2 5 3 5 6-6-1-12-2-19 0z" fill="#62b1f3"/><path d="M5 12c1-4 3-6 6-7l1 8z" fill="#a5d5fa"/><path d="M10.500 12v8c0 3-4 3-4 0" fill="none" stroke="#888" stroke-width="1.500"/></svg><b class="bd pink">2</b></div>
  <svg class="start" viewBox="0 0 24 24"><path fill="url(#gWin)" d="M.5.5h11v11H.5zM12.500.5h11v11h-11zM.5 12.500h11v11H.5zM12.500 12.500h11v11h-11z"/></svg>
  <div class="pill"><svg class="mag" viewBox="0 0 16 16"><circle cx="6.500" cy="6.500" r="5.300" fill="none" stroke="#ddd" stroke-width="1.800"/><path d="M10.500 10.500L15 15" stroke="#ddd" stroke-width="2"/></svg><span>Search</span><svg class="cricket" viewBox="0 0 40 26"><path d="M2 12C3 3 9 1 13 1c5 0 9 5 7 10-6 0-10 1-18 3z" fill="#3e76d6"/><path d="M7 11c0-5 2-8 5-9" stroke="#91b7f2" stroke-width="1.500" fill="none"/><path d="M2 14h12M3 17h10M4 20h9M6 12v10M10 12v10M3 12l2 9 8 1" stroke="#8a8a9a" fill="none" stroke-width=".8"/><path d="M33 8L18 22c-3 3-7 3-6-1L28 5z" fill="#eab273"/><path d="M30 7l8-6" stroke="#d83b3b" stroke-width="2"/><circle cx="34" cy="17" r="4.500" fill="#e34343"/><path d="M30 15l7 5" stroke="#fff"/></svg></div>
  <div class="apps">
    <span><svg viewBox="0 0 24 24"><path d="M6 1h17.500v16H6z" fill="#f2f2f2"/><path d="M0 7h18v15H0z" fill="#777" fill-opacity=".9"/></svg></span>
    <span><svg viewBox="0 0 24 24"><path d="M0 1h8l2 3h14v6H0z" fill="#d99512"/><path d="M0 5h24v17H0z" fill="url(#gFold)"/><path d="M4 22v-5a2 2 0 0 1 2-2h12a2 2 0 0 1 2 2v5z" fill="#1878cf"/><path d="M7 19h10" stroke="#0c56a0" stroke-width="1.500"/></svg></span>
    <span><svg viewBox="0 0 24 24"><path d="M7 5V1.500h10V5" fill="none" stroke="#35b2ec" stroke-width="1.500"/><path d="M1 5h22v15a3 3 0 0 1-3 3H4a3 3 0 0 1-3-3z" fill="#f5f5f5"/><path d="M7.500 9.500h4v4h-4z" fill="#f25022"/><path d="M12.500 9.500h4v4h-4z" fill="#7fba00"/><path d="M7.500 14.500h4v4h-4z" fill="#00a4ef"/><path d="M12.500 14.500h4v4h-4z" fill="#ffb900"/></svg></span>
    <span><svg viewBox="0 0 24 24"><path d="M2 22l1.500-5.500a10 10 0 1 1 4 4z" fill="none" stroke="#25d366" stroke-width="2.200"/><path d="M8 6.500c-3 3 4 11 9 9l.5-2-3-1.500-1.500 1.500c-1.500-.5-3-2-3.500-3.500L11 8.500 10 6z" fill="#25d366"/></svg><b class="bd lilac">2</b></span>
    <span><svg viewBox="0 0 24 24"><path d="M7 2h8l2 5h-4L9 18H4c-5 0-2-9 0-13 .8-2 1.500-3 3-3z" fill="url(#gCopA)"/><path d="M17 22H9L7 17h4l4-11h4c6 0 3 9 1 13-.8 2-1.500 3-3 3z" fill="url(#gCopB)"/></svg></span>
    <span><svg viewBox="0 0 24 24"><path d="M4 6l9-5 10 7v8H4z" fill="#1066c4"/><path d="M8 9h15.500v10a3 3 0 0 1-3 3H8z" fill="#34b4f0"/><path d="M8 19L23.500 9v11a3 3 0 0 1-3 3H8z" fill="#5fd8fb"/><rect y="5" width="14" height="14" rx="2" fill="#0f67bd"/><circle cx="7" cy="12" r="3.400" fill="none" stroke="#fff" stroke-width="1.900"/></svg></span>
    <span><svg viewBox="0 0 24 24"><circle cx="12" cy="12" r="12" fill="#126dc0"/><path d="M0 11C1 4 6 0 12 0c7 0 12 5 12 10 0 4-3 6-7 6-3 0-4-1-3-3 1-3-2-6-6-6-4 0-7 2-8 4z" fill="url(#gEdge)"/><path d="M9 12c-2 6 5 10 12 7-3 5-10 6-14 3-4-4-2-10 2-10z" fill="#0d4d96"/></svg></span>
    <span><svg viewBox="0 0 24 24"><path d="M12 12L1.600 6A12 12 0 0 1 22.400 6z" fill="#e64336"/><path d="M12 12L22.400 6A12 12 0 0 1 12 24z" fill="#fcc31e"/><path d="M12 12v12A12 12 0 0 1 1.600 6z" fill="#2da14c"/><path d="M12 6.500h10.600M7 14.500L1.600 6" stroke="#e64336" stroke-width="1"/><circle cx="12" cy="12" r="5.800" fill="#fff"/><circle cx="12" cy="12" r="4.500" fill="#4285f4"/></svg><em></em></span>
    <span><svg viewBox="0 0 24 24"><circle cx="12" cy="12" r="12" fill="url(#gTor)"/><path d="M12 3a9 9 0 0 1 0 18M12 6.500a5.500 5.500 0 0 1 0 11M12 9.500a2.500 2.500 0 0 1 0 5" fill="none" stroke="#d79bfa" stroke-width="1.200"/></svg></span>
    <span><svg viewBox="0 0 24 24"><circle cx="13" cy="5" r="4" fill="#8289ec"/><circle cx="20" cy="6" r="2.700" fill="#5a62c8"/><path d="M16 10h8v7c0 4-5 4-8 2z" fill="#5059c9"/><path d="M7 9h12v8c0 7-12 7-12 0z" fill="#7b83eb"/><rect y="5.500" width="13" height="13" rx="1.500" fill="#464eb8"/><path d="M3.500 9h6M6.500 9v7" stroke="#fff" stroke-width="1.800"/></svg></span>
    <span><svg viewBox="0 0 24 24"><rect width="24" height="24" rx="3" fill="#000"/><path d="M4 17v-2M7 17v-5M10 17V8M13 17V5M16 17v-7M19 17v-4" stroke="#fff" stroke-width="1.900"/></svg><em></em></span>
    <span class="cur"><svg viewBox="0 0 24 24"><path d="M12 0h9v24h-9z" fill="url(#gPb1)"/><path d="M7 6h9v18H7z" fill="url(#gPb2)"/><path d="M2 12h8v12H2z" fill="url(#gPb3)"/></svg><em></em></span>
  </div>
  <svg class="tray" viewBox="0 0 128 20"><path d="M1.500 13L7 7.500l5.500 5.500" fill="none" stroke="#fff" stroke-width="1.500"/><path d="M33 15a4 4 0 0 1 1-7c1-4 7-4 8 0 5 0 5 7 1 7z" fill="#bbb"/><circle cx="42" cy="14" r="5" fill="#54bfee"/><path d="M42 11v1.500M42 13.500v3.500" stroke="#123" stroke-width="1.500"/><g fill="none" stroke-width="1.400"><path d="M63 8c4-4 11-4 15 0" stroke="#777"/><path d="M65.500 10.500c3-3 8-3 10.500 0" stroke="#aaa"/><path d="M68 13c1.500-1.500 4-1.500 5.500 0" stroke="#fff"/></g><circle cx="70.700" cy="15" r="1.500" fill="#fff"/><path d="M87 8h3l4-3.500v11L90 12h-3zM96.500 7.500c1.500 1.500 1.500 4 0 5.500M98.500 5.500c2.500 2.500 2.500 7 0 9.500M101 4c3 3 3 9.500 0 12.500" fill="none" stroke="#fff" stroke-width="1.200"/><rect x="111" y="5.500" width="13" height="9" rx="2" fill="none" stroke="#fff" stroke-width="1.300"/><path d="M113 7.500h3v5h-3z" fill="#fff"/><path d="M125 8.500h2v3h-2" fill="#fff"/></svg>
  <div class="clock">09:22:01<br>31/07/2025</div>
</footer>
</body>
</html>
```

FILE: styles.css
```css
* { box-sizing: border-box; }
body { margin: 0; width: 1366px; height: 768px; overflow: hidden; display: flex; flex-direction: column; background: #141414; color: #ececec; font: 12px/16px "Open Sans", "Noto Sans", sans-serif; letter-spacing: -0.3px; white-space: nowrap; }
h2, h3, h6, p, ul { margin: 0; padding: 0; }
svg { display: block; flex: none; overflow: visible; }
.defs { position: absolute; width: 0; height: 0; }

/* icon strokes */
.w { fill: none; stroke: #d2d2d2; }
.b { fill: #0063b1; stroke: #74b9f5; }
.g { fill: #5a5a5a; stroke: #8b8b8b; }
.g2 { fill: #292929; stroke: #909090; }
.l { fill: none; stroke: #4a9fe3; }
.t { fill: none; stroke: #ddd; stroke-width: 1.1; }
.s-num { font: 8px "Open Sans", sans-serif; fill: #57b0f5; text-anchor: middle; letter-spacing: 0; }
.s-r { font: 600 15px "Open Sans", sans-serif; fill: #3c97dc; text-anchor: middle; }
.s-py { font: 600 15.5px "Open Sans", sans-serif; fill: #3c97dc; text-anchor: middle; letter-spacing: 0; }
.s-a { font: 17px "Open Sans", sans-serif; fill: #57a5e8; text-anchor: middle; }
.s-fx { font: italic 19px "Liberation Serif", serif; fill: #888; text-anchor: middle; }
.s-rail { font: 600 7.5px "Open Sans", sans-serif; fill: #ddd; text-anchor: middle; letter-spacing: -0.2px; }

.titlebar { height: 36px; display: flex; align-items: center; padding-left: 17px; }
.quick { width: 76px; height: 18px; margin-right: 9px; }
.doc-title { width: 327px; font-size: 12px; padding-top: 5px; letter-spacing: -0.3px; }
.doc-title b { font-size: 9px; vertical-align: 1px; margin: 0 4.500px; }
.title-caret { width: 10px; height: 7px; margin-left: 5px; }
.signin { margin-left: auto; width: 46px; letter-spacing: -0.15px; }
.avatar { width: 20px; height: 20px; margin-bottom: 3px; }
.winctl { width: 100px; height: 12px; margin: 0 15.500px 0 32px; }

.menu { height: 34px; display: flex; align-items: center; padding-bottom: 6px; font-size: 13.5px; letter-spacing: -0.25px; }
.menu > span { flex: none; padding-bottom: 1px; }
.m-file { width: 77px; padding-left: 23px; }
.menu > .m-home { font-weight: 700; width: 38px; color: #fff; margin-right: 23px; letter-spacing: -0.55px; height: 28px; margin-top: 6px; padding: 3px 0 0; border-bottom: 2px solid #2aac94; }
.m-ins { width: 58px; } .m-mod { width: 83px; } .m-view { width: 53px; } .m-opt { width: 80px; }
.share { margin: 0 7px 0 auto; width: 83px; height: 24px; padding: 0 8px 0 6px; display: flex; align-items: center; gap: 9px; background: #0c695a; color: #b8d6d0; border: 0; border-radius: 4px; font: 12.5px "Open Sans"; letter-spacing: -0.5px; }
.share svg { width: 16px; height: 14px; }
.share .sh-ch { width: 10px; height: 8px; margin-left: -5px; }

.ribbon { position: relative; height: 100px; margin: 0 8px; border-radius: 8px; background: #292929; display: flex; overflow: hidden; }
.grp { height: 92px; margin-top: 4px; display: flex; flex-direction: column; border-right: 1px solid #444; flex: none; overflow: hidden; }
.grp-body { display: flex; flex: none; height: 77px; }
.grp h6 { font: 600 10px/13px "Open Sans"; text-align: center; color: #eee; letter-spacing: -0.25px; }
.big { display: flex; flex-direction: column; align-items: center; flex: none; padding-top: 5px; text-align: center; }
.big > svg { width: 30px; height: 32px; margin-bottom: 3px; }
.big p { line-height: 16px; }
.full { width: 100%; }
.dim { color: #5c5c5c; }
.cv { width: 8px; height: 8px; display: inline-block; vertical-align: 0; margin-left: 1px; }
.g-clip { width: 81px; }
.g-clip .big { width: 40px; margin-left: 8px; }
.minis { padding: 4px 0 0 4px; display: grid; gap: 8px; height: 74px; }
.minis svg { width: 16px; height: 18px; }
.g-data { width: 300px; }
.g-data .big { width: 56px; }
.links p { height: 26px; display: flex; align-items: center; letter-spacing: -0.3px; }
.links p > svg:first-child { width: 16px; height: 18px; margin-right: 3px; }
.links .cv { margin-left: 2px; } .links .far { margin-left: 4px; }
.l1 { width: 125px; margin-left: -3px; }
.g-query { width: 117px; }
.q1 { width: 74px; } .q2 { width: 28px; }
.q2 p { margin: 0 -10px; }
.g-insert { width: 410px; }
.i1 { width: 53px; margin-left: 2px; }
.gallery { width: 254px; height: 62px; margin: 7px 0 0 -3px; display: flex; border: 1px solid #666; border-radius: 5px; }
.gal-grid { width: 236px; padding: 7px 6px 5px; display: grid; grid-template-columns: repeat(9, 16px); column-gap: 10px; row-gap: 13px; grid-auto-rows: 16px; border-right: 1px solid #666; }
.gal-grid svg { width: 16px; height: 16px; }
.gal-drop { flex: 1; display: flex; align-items: center; justify-content: center; padding-top: 6px; }
.i2 { width: 48px; } .i3 { width: 43px; }
.g-calc { width: 188px; }
.c1 { width: 88px; } .c2 { width: 34px; } .c3 { width: 65px; }
.c2 p { margin: 0 -10px; }
.g-sens { width: 74px; } .g-share { width: 59px; }
.g-cop { width: 93px; border: 0; }
.g-cop h6 { margin-left: 38px; }
.p1 { width: 81px; padding-left: 8px; } .p2 { width: 30px; align-items: flex-start; }
.collapse { position: absolute; right: 8px; bottom: 9px; width: 10px; height: 8px; }

.work { height: 525px; display: flex; }
.rail { width: 41px; border-right: 1px solid #444; display: flex; flex-direction: column; }
.rail svg { width: 41px; height: 40px; padding: 11px 11px 11px 12px; }
.rail .on { box-shadow: inset 3px 0 #2aac94; }
.stage { width: 930px; display: flex; flex-direction: column; }
.stage-top { display: flex; height: 490px; background: #fff; }
.canvas { width: 897px; height: 490px; font-family: "Open Sans", sans-serif; letter-spacing: 0; box-shadow: inset 0 4px 4px -2px #ccc; }
.faint { fill: none; stroke: #efefef; } .strong { fill: none; stroke: #333; stroke-width: 1.2; }
.track { fill: #ececec; } .bar { fill: #303030; stroke: #999; stroke-width: .5; }
.head { font: 400 9.5px Roboto, sans-serif; fill: #252423; }
.lab { font-size: 8px; fill: #484644; } .val { font-size: 8px; fill: #777; }
.strongtxt { font-size: 7.8px; font-weight: 700; fill: #252423; }
.kpi { font: 36px Roboto, sans-serif; fill: #252423; } .kpilab { font-size: 10.5px; fill: #605e5c; }
.filters { width: 33px; border-left: 1px solid #aaa; color: #222; padding: 14px 0 0 11px; }
.filters svg { width: 10px; height: 10px; }
.filters .fi { margin: 18px 0 0 3px; width: 10px; height: 10px; }
.filters span { writing-mode: vertical-rl; font-size: 14px; font-weight: 600; margin: 10px 0 0 -3px; display: block; line-height: 16px; letter-spacing: 0; }
.tabs { height: 35px; background: #292929; display: flex; overflow: hidden; }
.tools { width: 128px; display: flex; border-right: 1px solid #666; }
.dev { height: 31px; padding-top: 6px; }
.dev.on { width: 24px; margin-left: 10px; border-bottom: 3px solid #2aac94; }
.dev.on svg { width: 18px; height: 16px; margin-left: 3px; margin-top: 1px; }
.dev.ph { margin-left: 26px; } .dev.ph svg { width: 12px; height: 18px; }
.nav { width: 28px; height: 10px; margin: 13px 0 0 21px; }
.tab { position: relative; flex: none; border-right: 1px solid #484848; line-height: 37px; text-align: center; color: #fff; letter-spacing: -0.25px; }
.w1 { width: 64px; } .w2 { width: 117px; } .w3 { width: 126px; } .w4 { width: 128px; } .w5 { width: 68px; } .w6 { width: 164px; }
.w7 { width: 96px; text-align: left; padding-left: 20px; overflow: hidden; border: 0; }
.active { font-weight: 600; box-shadow: inset 0 -4px #2aac94; letter-spacing: -0.4px; }
.active i { position: absolute; top: 1px; right: 4px; font: 700 10px/16px "Open Sans"; }
.plus { width: 39px; background: linear-gradient(#202020, #202020) center / 11px 3px no-repeat, linear-gradient(#202020, #202020) center / 3px 11px no-repeat, #2aac94; }

.pane { width: 181px; border-left: 1px solid #666; padding: 10px 8px 0; }
.build { border-left-color: #333; }
.pane header { display: flex; height: 18px; align-items: center; justify-content: space-between; }
.pane h2 { font: 700 15.500px/18px "Open Sans"; color: #fff; letter-spacing: -0.6px; }
.pctl { width: 30px; height: 10px; margin-right: 3px; margin-bottom: 2px; }
.pane h3 { font: 12px/16px "Open Sans"; color: #fff; margin-top: 10px; letter-spacing: -0.25px; }
.viz { margin-top: 3px; width: 164px; height: 214px; background: #000; border: 1px solid #888; border-radius: 2px; padding: 6px 7px; display: grid; grid-template-columns: repeat(6, 18px); gap: 8px; grid-auto-rows: 18px; }
.viz svg { width: 18px; height: 18px; }
.pane .dl { margin-top: 9px; }
.drop { margin-top: 3px; width: 164px; height: 40px; border: 1px dashed #aaa; padding: 4px; }
.drop button { width: 154px; height: 30px; background: #292929; border: 1px solid #aaa; color: #fff; font: 600 12px "Open Sans"; letter-spacing: -0.2px; }
.find { margin: 17px 0 10px -4px; width: 172px; height: 24px; border: 1px solid #777; border-radius: 4px; background: #202020; display: flex; align-items: center; gap: 7px; padding-left: 12px; color: #999; font-size: 13px; letter-spacing: -0.3px; }
.find svg { width: 14px; height: 14px; }
.pane ul { list-style: none; padding-left: 6px; }
.pane li { height: 24px; display: flex; align-items: center; gap: 4px; color: #f4f4f4; letter-spacing: -0.3px; }
.pane li svg { width: 14px; height: 14px; } .pane li .ar { width: 9px; height: 10px; margin-right: 2px; }
.switch { width: 33px; border-left: 1px solid #666; background: #292929; display: flex; flex-direction: column; }
.switch span { height: 32px; display: flex; align-items: center; justify-content: center; background: #1e1e1e; }
.switch svg { width: 20px; height: 20px; }
.switch .sel { background: #303030; border: 1px solid #666; border-left: 0; }
.switch .cog { margin-top: auto; border-top: 1px solid #666; height: 32px; }

.status { height: 25px; border-top: 1px solid #666; border-bottom: 1px solid #444; display: flex; align-items: center; padding-left: 4px; letter-spacing: -0.2px; padding-top: 2px; }
.zoomer { width: 124px; height: 14px; margin-left: auto; }
.pct { width: 42px; padding-left: 12px; letter-spacing: -.4px; } .fit { width: 16px; height: 10px; margin: 0 18px 0 13px; }

.taskbar { height: 48px; background: #202022; display: flex; align-items: center; letter-spacing: 0; }
.weather { width: 24px; height: 24px; margin-left: 20px; position: relative; }
.weather svg { width: 24px; height: 24px; }
.bd { position: absolute; width: 16px; height: 16px; border-radius: 50%; color: #222; font: 11px/16px "Open Sans"; text-align: center; }
.pink { background: #ff9aa5; left: 11px; top: -5px; }
.start { width: 24px; height: 24px; margin: 1px 0 0 243px; }
.pill { width: 220px; height: 32px; margin-left: 13px; border: 1px solid #4b4b4c; border-radius: 16px; background: #3b3b3c; display: flex; align-items: center; padding-left: 11px; color: #d0d0d0; font-size: 13px; }
.mag { width: 15px; height: 15px; margin-right: 10px; }
.cricket { width: 39px; height: 26px; margin: 0 11px 0 auto; }
.apps { display: flex; margin-left: 2px; }
.apps span { position: relative; width: 44px; height: 40px; display: flex; align-items: center; justify-content: center; }
.apps svg { width: 24px; height: 24px; }
.lilac { background: #d59ce0; left: 23px; top: 3px; }
.apps em { position: absolute; left: 19px; bottom: 1px; width: 6px; height: 3px; border-radius: 2px; background: #999; }
.apps .cur { background: #313133; border-radius: 4px; width: 40px; margin-left: 2px; }
.apps .cur em { left: 12px; width: 16px; background: #dc9be5; }
.tray { width: 128px; height: 20px; margin-left: 69px; }
.clock { margin: 0 19px 0 auto; text-align: right; font-size: 12px; line-height: 16px; letter-spacing: -0.35px; color: #fff; }
```
